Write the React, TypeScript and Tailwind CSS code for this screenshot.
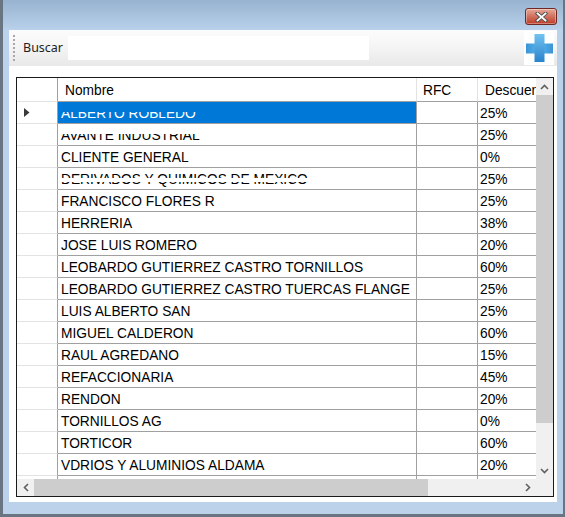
import React from "react";

type Row = { name: string; desc: string; band?: string };

const rows: Row[] = [
  { name: "ALBERTO ROBLEDO", desc: "25%", band: "top-[3px] h-[7px] bg-[#0078d7]" },
  { name: "AVANTE INDUSTRIAL", desc: "25%", band: "top-[3px] h-[7px] bg-white" },
  { name: "CLIENTE GENERAL", desc: "0%" },
  { name: "DERIVADOS Y QUIMICOS DE MEXICO", desc: "25%", band: "top-[10px] h-[4px] bg-white" },
  { name: "FRANCISCO FLORES R", desc: "25%" },
  { name: "HERRERIA", desc: "38%" },
  { name: "JOSE LUIS ROMERO", desc: "20%" },
  { name: "LEOBARDO GUTIERREZ CASTRO TORNILLOS", desc: "60%" },
  { name: "LEOBARDO GUTIERREZ CASTRO TUERCAS FLANGE", desc: "25%" },
  { name: "LUIS ALBERTO SAN", desc: "25%" },
  { name: "MIGUEL CALDERON", desc: "60%" },
  { name: "RAUL AGREDANO", desc: "15%" },
  { name: "REFACCIONARIA", desc: "45%" },
  { name: "RENDON", desc: "20%" },
  { name: "TORNILLOS AG", desc: "0%" },
  { name: "TORTICOR", desc: "60%" },
  { name: "VDRIOS Y ALUMINIOS ALDAMA", desc: "20%" },
  { name: "", desc: "" },
];

const chevrons = {
  up: { w: 9, h: 6, pts: "1,5 4.5,1.5 8,5" },
  down: { w: 9, h: 6, pts: "1,1 4.5,4.5 8,1" },
  left: { w: 6, h: 9, pts: "5,1 1.5,4.5 5,8" },
  right: { w: 6, h: 9, pts: "1,1 4.5,4.5 1,8" },
};

const Chevron = ({ dir }: { dir: keyof typeof chevrons }) => {
  const c = chevrons[dir];
  return (
    <svg width={c.w} height={c.h} viewBox={`0 0 ${c.w} ${c.h}`}>
      <polyline points={c.pts} fill="none" stroke="#606060" strokeWidth="1.6" />
    </svg>
  );
};

const PlusIcon = () => (
  <svg width="27" height="28" viewBox="0 0 27 28">
    <defs>
      <linearGradient id="pv" x1="0" y1="0" x2="0" y2="1">
        <stop offset="0" stopColor="#72c3f1" />
        <stop offset="1" stopColor="#2a82cb" />
      </linearGradient>
      <linearGradient id="ph" x1="0" y1="0" x2="1" y2="0">
        <stop offset="0" stopColor="#3a93d6" />
        <stop offset="0.5" stopColor="#5db6ec" />
        <stop offset="1" stopColor="#3a93d6" />
      </linearGradient>
    </defs>
    <rect x="0" y="9.5" width="27" height="10" fill="url(#ph)" />
    <rect x="8.5" y="0" width="10" height="28" fill="url(#pv)" />
  </svg>
);

const CloseGlyph = () => (
  <svg width="13" height="10" viewBox="0 0 13 10">
    <path d="M2.5 1.5 L10.5 8.5 M10.5 1.5 L2.5 8.5" stroke="#4d4d4d" strokeWidth="3.6" strokeLinecap="square" />
    <path d="M2.5 1.5 L10.5 8.5 M10.5 1.5 L2.5 8.5" stroke="#ffffff" strokeWidth="1.8" strokeLinecap="square" />
  </svg>
);

const cellFont = "font-['Liberation_Sans',Arial,sans-serif] text-[13.75px] text-black";

export default function App() {
  return (
    <div className="flex h-[517px] w-[565px] flex-col overflow-hidden border-b-[3px] border-l-[3px] border-r-2 border-[#6a7583] bg-[#bcd2ea]">
      {/* title bar */}
      <div className="flex h-[30px] shrink-0 justify-end bg-linear-to-b from-[#98b3d0] to-[#b9d1ea] pr-[6px] pt-[8px]">
        <div className="flex h-[17px] w-[32px] items-center justify-center rounded-[3px] border border-[#6e2a22] bg-linear-to-b from-[#e7a898] via-[#d0705e] to-[#bd3b26] shadow-[inset_0_0_0_1px_rgba(255,255,255,0.35)]">
          <CloseGlyph />
        </div>
      </div>

      {/* frame + client */}
      <div className="flex min-h-0 flex-1 px-[6px] pb-[12px]">
        <div className="flex flex-1 flex-col bg-white">
          {/* toolbar */}
          <div className="flex h-[36px] shrink-0 items-center bg-linear-to-b from-[#fcfcfc] via-[#f4f4f4] to-[#e8e8e8] pl-[4px] pr-[3px]">
            <div className="flex flex-col gap-[2px]">
              {Array.from({ length: 7 }).map((_, i) => (
                <div key={i} className="h-[2px] w-[2px] bg-[#a8a8a8]" />
              ))}
            </div>
            <span className="ml-[8px] w-[45px] font-['Segoe_UI','Noto_Sans',sans-serif] text-[12.5px] text-[#1e1e1e]">
              Buscar
            </span>
            <div className="h-[24px] w-[301px] bg-white" />
            <div className="ml-auto flex h-[34px] w-[30px] items-center justify-center bg-white">
              <PlusIcon />
            </div>
          </div>

          {/* data grid */}
          <div className="ml-[7px] mt-[11px] h-[420px] w-[538px] border border-[#1a1a1a]">
            <div className="grid h-full grid-cols-[519px_17px] grid-rows-[401px_17px]">
              <div className={`overflow-hidden ${cellFont}`}>
                {/* header */}
                <div className="flex h-[24px] w-max">
                  <div className="h-full w-[41px] shrink-0 border-b border-r border-b-[#e3e3e3] border-r-[#a0a0a0]" />
                  <div className="h-full w-[359px] shrink-0 border-b border-r border-b-[#a0a0a0] border-r-[#e3e3e3] pl-[7px] pt-[4px] leading-[18px]">
                    Nombre
                  </div>
                  <div className="h-full w-[61px] shrink-0 border-b border-r border-b-[#a0a0a0] border-r-[#e3e3e3] pl-[6px] pt-[4px] leading-[18px]">
                    RFC
                  </div>
                  <div className="h-full w-[90px] shrink-0 border-b border-b-[#a0a0a0] pl-[7px] pt-[4px] leading-[18px]">
                    Descuento
                  </div>
                </div>

                {rows.map((r, i) => (
                  <div key={i} className="flex h-[22px] w-max">
                    <div className="flex h-full w-[41px] shrink-0 items-center border-b border-r border-b-[#e3e3e3] border-r-[#a0a0a0] pl-[7px]">
                      {i === 0 && (
                        <svg width="6" height="9" viewBox="0 0 6 9">
                          <polygon points="0,0 5.5,4.5 0,9" fill="#3a3a3a" />
                        </svg>
                      )}
                    </div>
                    <div
                      className={`relative h-full w-[359px] shrink-0 overflow-hidden whitespace-nowrap border-b border-r border-[#a0a0a0] pl-[3px] pt-[2px] leading-[19px] ${
                        i === 0 ? "bg-[#0078d7] text-white" : ""
                      }`}
                    >
                      {r.name}
                      {r.band && <div className={`absolute inset-x-0 ${r.band}`} />}
                    </div>
                    <div className="h-full w-[61px] shrink-0 border-b border-r border-[#a0a0a0]" />
                    <div className="h-full w-[90px] shrink-0 border-b border-[#a0a0a0] pl-[2px] pt-[2px] leading-[19px]">
                      {r.desc}
                    </div>
                  </div>
                ))}
              </div>

              {/* vertical scrollbar */}
              <div className="flex flex-col bg-[#f0f0f0]">
                <div className="flex h-[17px] shrink-0 items-center justify-center">
                  <Chevron dir="up" />
                </div>
                <div className="h-[328px] shrink-0 bg-[#cdcdcd]" />
                <div className="flex-1" />
                <div className="flex h-[17px] shrink-0 items-center justify-center">
                  <Chevron dir="down" />
                </div>
              </div>

              {/* horizontal scrollbar */}
              <div className="flex bg-[#f0f0f0]">
                <div className="flex w-[17px] shrink-0 items-center justify-center">
                  <Chevron dir="left" />
                </div>
                <div className="w-[394px] shrink-0 bg-[#cdcdcd]" />
                <div className="flex-1" />
                <div className="flex w-[17px] shrink-0 items-center justify-center">
                  <Chevron dir="right" />
                </div>
              </div>

              <div className="bg-[#f0f0f0]" />
            </div>
          </div>
        </div>
      </div>
    </div>
  );
}
